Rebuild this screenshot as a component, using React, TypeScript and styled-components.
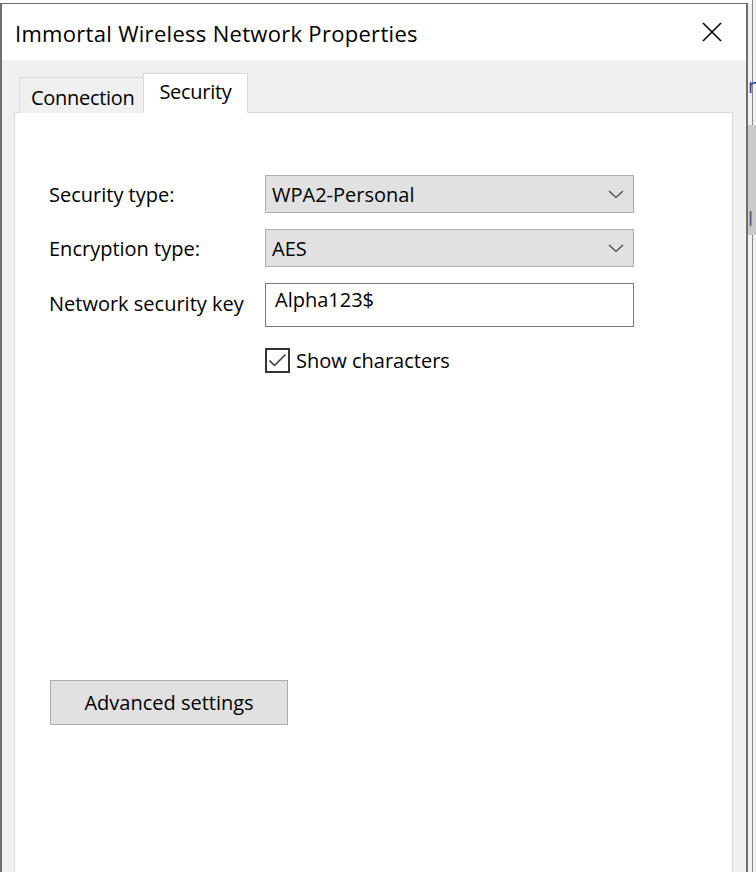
import styled, { createGlobalStyle } from 'styled-components';

const GlobalStyle = createGlobalStyle`
  html, body {
    margin: 0;
    padding: 0;
  }
  body {
    width: 756px;
    height: 872px;
    overflow: hidden;
    background: #f0f0f0;
    font-family: "Open Sans", "Noto Sans", sans-serif;
    color: #000;
  }
`;

const Desktop = styled.div`
  position: relative;
  width: 756px;
  height: 872px;
  overflow: hidden;
  background: #f0f0f0;
`;

// the Wi-Fi Status window behind the dialog
const BackWindow = styled.div`
  position: absolute;
  left: -4px;
  top: -30px;
  width: 755px;
  height: 940px;
  background: #f0f0f0;
  border: 1px solid #8a8a8a;
`;

const BackTitle = styled.div`
  height: 33px;
  padding: 0 0 0 26px;
  display: flex;
  align-items: flex-end;
  font-size: 20px;
  line-height: 26px;
  color: #555;
  background: #fff;
`;

const BackBlueText = styled.span`
  position: absolute;
  left: 748px;
  top: 72px;
  font-size: 20px;
  line-height: 28px;
  color: #1a4f9c;
`;

const BackGreyBar = styled.div`
  position: absolute;
  left: 748px;
  top: 125px;
  width: 10px;
  height: 110px;
  background: #cacaca;
  color: #4a5a8a;
  font-size: 20px;
  line-height: 20px;
  padding-top: 84px;
  box-sizing: border-box;
  overflow: hidden;
`;

const Dialog = styled.div`
  position: absolute;
  left: 0;
  top: 3px;
  width: 744px;
  height: 880px;
  background: #f0f0f0;
  border: 1px solid #6f6f6f;
  border-width: 1px 2px 0 2px;
  display: flex;
  flex-direction: column;
`;

const TitleBar = styled.div`
  height: 56px;
  flex-shrink: 0;
  background: #fff;
  display: flex;
  align-items: center;
  justify-content: space-between;
  padding: 0 0 0 13px;
`;

const Title = styled.span`
  font-size: 22px;
  letter-spacing: 0.3px;
  margin-top: 2px;
`;

const CloseButton = styled.div`
  width: 46px;
  height: 40px;
  margin-right: 11px;
  display: flex;
  align-items: center;
  justify-content: center;
`;

const Body = styled.div`
  flex: 1;
  padding: 12px 13px 0 12px;
  display: flex;
  flex-direction: column;
`;

const TabRow = styled.div`
  display: flex;
  align-items: flex-end;
  padding-left: 5px;
  height: 41px;
  position: relative;
  z-index: 1;
  margin-bottom: -1px;
`;

const Tab = styled.div<{ $active?: boolean }>`
  box-sizing: border-box;
  height: ${(p) => (p.$active ? '40px' : '36px')};
  padding: ${(p) => (p.$active ? '4px 16px 0 15px' : '6px 9px 0 11px')};
  background: ${(p) => (p.$active ? '#fff' : '#f0f0f0')};
  border: 1px solid #d9d9d9;
  border-bottom: ${(p) => (p.$active ? '1px solid #fff' : 'none')};
  ${(p) => (p.$active ? '' : 'border-right: none;')}
  font-size: 20px;
  line-height: 28px;
  letter-spacing: -0.3px;
`;

const Panel = styled.div`
  flex: 1;
  background: #fff;
  border: 1px solid #d9d9d9;
  padding: 62px 0 0 34px;
  display: flex;
  flex-direction: column;
`;

const Form = styled.div`
  display: grid;
  grid-template-columns: 216px 369px;
  grid-auto-rows: auto;
  row-gap: 16px;
  align-items: center;
`;

const Label = styled.span<{ $raise?: boolean }>`
  font-size: 20px;
  margin-bottom: ${(p) => (p.$raise ? '4px' : '0')};
`;

const Select = styled.div`
  box-sizing: border-box;
  height: 38px;
  background: #e1e1e1;
  border: 1px solid #adadad;
  display: flex;
  align-items: center;
  justify-content: space-between;
  padding: 0 8px 0 6px;
  font-size: 20px;
`;

const TextBox = styled.div`
  box-sizing: border-box;
  height: 44px;
  background: #fff;
  border: 1px solid #7a7a7a;
  padding: 0 0 12px 9px;
  display: flex;
  align-items: center;
  font-size: 20px;
`;

const CheckRow = styled.label`
  grid-column: 2;
  display: flex;
  align-items: center;
  gap: 6px;
  font-size: 20px;
  margin-top: 4px;
`;

const CheckBox = styled.span`
  box-sizing: border-box;
  width: 25px;
  height: 25px;
  border: 2px solid #333;
  background: #fff;
  display: flex;
  align-items: center;
  justify-content: center;
`;

const AdvancedButton = styled.button`
  box-sizing: border-box;
  margin-top: 306px;
  margin-left: 1px;
  width: 238px;
  height: 45px;
  background: #e1e1e1;
  border: 1px solid #adadad;
  font-family: inherit;
  font-size: 20px;
  color: #000;
  padding: 0;
`;

const Chevron = () => (
  <svg width="18" height="10" viewBox="0 0 18 10">
    <path d="M2 2 L9 8.5 L16 2" fill="none" stroke="#444" strokeWidth="1.2" />
  </svg>
);

export default function App() {
  return (
    <Desktop>
      <GlobalStyle />
      <BackWindow>
        <BackTitle>Wi-Fi Status</BackTitle>
      </BackWindow>
      <BackBlueText>n</BackBlueText>
      <BackGreyBar>l</BackGreyBar>
      <Dialog>
        <TitleBar>
          <Title>Immortal Wireless Network Properties</Title>
          <CloseButton>
            <svg width="20" height="20" viewBox="0 0 20 20">
              <path d="M1 1 L19 19 M19 1 L1 19" stroke="#000" strokeWidth="1.6" />
            </svg>
          </CloseButton>
        </TitleBar>
        <Body>
          <TabRow>
            <Tab>Connection</Tab>
            <Tab $active>Security</Tab>
          </TabRow>
          <Panel>
            <Form>
              <Label>Security type:</Label>
              <Select>
                WPA2-Personal
                <Chevron />
              </Select>
              <Label>Encryption type:</Label>
              <Select>
                AES
                <Chevron />
              </Select>
              <Label $raise>Network security key</Label>
              <TextBox>Alpha123$</TextBox>
              <CheckRow>
                <CheckBox>
                  <svg width="19" height="15" viewBox="0 0 19 15">
                    <path d="M1.5 7.5 L6.5 12.5 L17.5 1.5" fill="none" stroke="#333" strokeWidth="1.5" />
                  </svg>
                </CheckBox>
                Show characters
              </CheckRow>
            </Form>
            <AdvancedButton>Advanced settings</AdvancedButton>
          </Panel>
        </Body>
      </Dialog>
    </Desktop>
  );
}
